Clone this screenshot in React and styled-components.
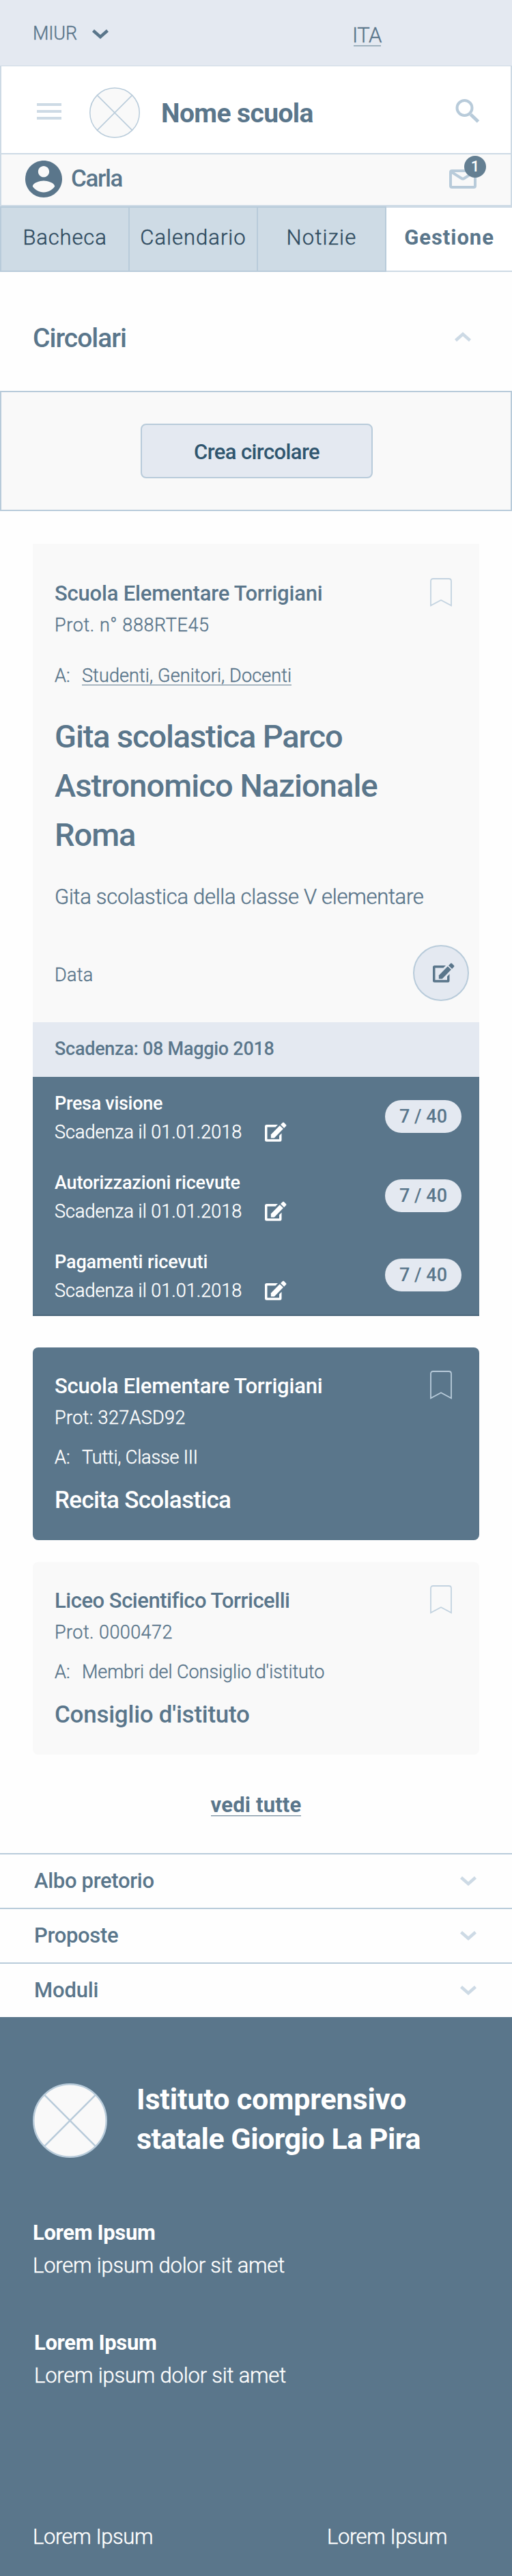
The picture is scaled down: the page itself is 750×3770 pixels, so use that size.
import React from 'react';
import styled, { createGlobalStyle, css } from 'styled-components';

const c = {
  slate: '#5a768b',
  navy: '#2f4b60',
  line: '#b8cbda',
  pale: '#cddae5',
  tab: '#cedbe5',
  mist: '#e4e9f1',
  paper: '#f9f9f9',
  page: '#fefefe',
};

const GlobalStyle = createGlobalStyle`
  *, *::before, *::after { box-sizing: border-box; }
  body { margin: 0; background: ${c.page}; }
  svg { display: block; flex: none; }
`;

const Page = styled.div`
  width: 750px;
  min-height: 3770px;
  display: flex;
  flex-direction: column;
  color: ${c.slate};
  background: ${c.page};
  font-family: Roboto, 'Liberation Sans', sans-serif;
`;

/* Light text gets a hairline stroke, for a weight between light and regular. */
const Text = styled.span`
  display: block;
  font-size: ${(p) => p.$size || 31}px;
  font-weight: ${(p) => p.$weight || 300};
  line-height: ${(p) => p.$line || 44}px;
  letter-spacing: ${(p) => p.$track || 0}px;
  white-space: nowrap;
  -webkit-text-stroke: ${(p) => (p.$weight > 300 ? 0 : 0.4)}px currentColor;
`;

/* ---------- header ---------- */

const TopBar = styled.div`
  display: flex;
  height: 96px;
  padding-left: 48px;
  background: ${c.mist};
`;

const Ministry = styled.div`
  display: flex;
  align-items: center;
  gap: 22px;
  width: 470px;
  padding-top: 1px;
  svg { margin-top: 3px; }
`;

const Language = styled(Text).attrs({ as: 'a' })`
  width: 40px;
  height: 31px;
  margin-top: 37px;
  border-bottom: 2px solid #9fb1be;
  text-indent: -2px;
`;

const Header = styled.header`
  display: flex;
  align-items: center;
  height: 130px;
  padding: 8px 45px 0 52px;
  background: #fff;
  border: 2px solid ${c.pale};
  border-top-width: 1px;
`;

const MenuIcon = styled.svg` margin-bottom: 3px; `;
const SchoolLogo = styled.svg` margin-left: 41px; `;
const SchoolName = styled(Text)` margin: 3px 0 0 31px; `;
const SearchIcon = styled.svg` margin: 0 0 5px auto; `;

const UserBar = styled.div`
  display: flex;
  align-items: center;
  height: 76px;
  padding: 0 36px 2px 35px;
  background: ${c.paper};
  border: solid ${c.pale};
  border-width: 0 2px 2px;
`;

const UserName = styled(Text)` margin-left: 13px; `;

const Mailbox = styled.div`
  position: relative;
  width: 54px;
  margin-left: auto;
`;

const Badge = styled.span`
  position: absolute;
  top: -20px;
  right: 0;
  width: 32px;
  height: 32px;
  border-radius: 50%;
  background: #647f92;
  color: #fff;
  font-size: 22px;
  font-weight: 500;
  line-height: 32px;
  text-align: center;
`;

const Tabs = styled.nav`
  display: grid;
  grid-template-columns: 190px 188px 188px 184px;
  height: 96px;
`;

const Tab = styled.a`
  display: flex;
  align-items: center;
  justify-content: center;
  padding-bottom: 5px;
  color: ${c.navy};
  background: ${c.tab};
  border: solid ${c.line};
  border-width: 2px 2px 2px 0;
  &:first-child { border-left-width: 2px; }
  ${(p) =>
    p.$active &&
    css`
      color: ${c.slate};
      background: #fff;
      border-color: ${c.pale};
      border-right-width: 0;
    `}
`;

/* ---------- circulars ---------- */

const SectionHead = styled.div`
  display: flex;
  align-items: center;
  justify-content: space-between;
  height: 174px;
  padding: 19px 60px 0 48px;
  svg { margin-bottom: 3px; }
`;

const CreateBox = styled.div`
  display: flex;
  align-items: center;
  justify-content: center;
  height: 176px;
  padding-left: 2px;
  background: ${c.paper};
  border: 2px solid ${c.line};
`;

const CreateButton = styled.button`
  display: flex;
  align-items: center;
  justify-content: center;
  width: 340px;
  height: 80px;
  padding: 3px 0 0;
  color: #30566f;
  font-family: inherit;
  background: ${c.mist};
  border: 2px solid ${c.line};
  border-radius: 8px;
`;

const CardList = styled.section`
  display: flex;
  flex-direction: column;
  padding: 48px 48px 0;
`;

const Card = styled.article`
  background: ${c.paper};
`;

const CardBody = styled.div`
  padding: 51px 15px 31px 32px;
`;

const CompactCard = styled.article`
  height: 282px;
  margin-top: ${(p) => p.$gap}px;
  padding: 35px 15px 0 32px;
  color: ${(p) => (p.$dark ? '#fff' : c.slate)};
  background: ${(p) => (p.$dark ? c.slate : c.paper)};
  border-radius: 8px;
`;

const CardTop = styled.div`
  display: flex;
  justify-content: space-between;
  padding-right: 25px;
  svg { margin-top: -1px; }
`;

const Recipients = styled.div`
  display: grid;
  grid-template-columns: 40px auto;
  justify-content: start;
  height: 27px;
  margin-top: ${(p) => p.$gap}px;
`;

const RecipientLink = styled(Text).attrs({ as: 'a' })`
  height: 27px;
  border-bottom: 1px solid ${c.slate};
`;

const Title = styled.h2`
  margin: 39px 0 33px;
  font-weight: 500;
`;

const CompactTitle = styled(Text)` margin-top: 25px; `;

const DateRow = styled.div`
  display: flex;
  align-items: center;
  justify-content: space-between;
  height: 82px;
  margin-top: 48px;
`;

const DateLabel = styled(Text)` padding-top: 5px; `;

const EditButton = styled.button`
  display: flex;
  align-items: center;
  justify-content: center;
  width: 82px;
  height: 82px;
  padding: 0 0 1px 7px;
  color: ${c.slate};
  background: ${c.mist};
  border: 2px solid ${c.line};
  border-radius: 50%;
`;

const Deadline = styled.div`
  display: flex;
  align-items: center;
  height: 80px;
  padding: 0 32px 2px;
  background: ${c.mist};
`;

const Responses = styled.div`
  color: #fff;
  background: ${c.slate};
  border-bottom: 2px solid #4a667a;
`;

const ResponseRow = styled.div`
  display: flex;
  justify-content: space-between;
  height: 116px;
  padding: 18px 26px 0 32px;
`;

const DueDate = styled.div`
  display: flex;
  align-items: center;
  gap: 33px;
  svg { margin-bottom: 2px; }
`;

const DueText = styled(Text)` width: 275px; `;

const Count = styled.span`
  width: 112px;
  height: 48px;
  margin-top: 16px;
  border-radius: 24px;
  color: ${c.slate};
  background: ${c.mist};
  font-size: 27px;
  font-weight: 500;
  line-height: 48px;
  text-align: center;
`;

const SeeAll = styled(Text).attrs({ as: 'a' })`
  align-self: center;
  height: 32px;
  margin: 58px 0 54px;
  border-bottom: 1px solid ${c.slate};
`;

const AccordionRow = styled.div`
  display: flex;
  align-items: center;
  justify-content: space-between;
  height: 80px;
  padding: 0 52px 0 50px;
  border-top: 2px solid ${c.line};
`;

/* ---------- footer ---------- */

const Footer = styled.footer`
  flex: 1;
  padding: 91px 48px 0;
  color: #fff;
  background: ${c.slate};
`;

const Institute = styled.div`
  display: flex;
  align-items: center;
  gap: 43px;
  height: 116px;
  svg { margin-top: 4px; }
`;

const FooterBlock = styled.div`
  margin-top: ${(p) => p.$gap}px;
  padding-left: ${(p) => p.$indent || 0}px;
`;

const FooterLinks = styled.div`
  display: grid;
  grid-template-columns: 431px auto;
  margin-top: 188px;
`;

/* ---------- drawings ---------- */

const Chevron = ({ color = c.pale, up }) => (
  <svg width="24" height="14" viewBox="0 0 24 14" fill="none" stroke={color} strokeWidth="4.5">
    <path d={up ? 'M1.5 12.3L12 3L22.5 12.3' : 'M1.5 1.7L12 11L22.5 1.7'} />
  </svg>
);

const Placeholder = ({ as: Tag = 'svg', size, stroke }) => {
  const mid = size / 2;
  const r = mid - stroke / 2;
  const d = r * 0.7;
  return (
    <Tag width={size} height={size} viewBox={`0 0 ${size} ${size}`} stroke={c.line} strokeWidth={stroke}>
      <circle cx={mid} cy={mid} r={r} fill={c.paper} />
      <path d={`M${mid - d} ${mid - d}L${mid + d} ${mid + d}M${mid + d} ${mid - d}L${mid - d} ${mid + d}`} />
    </Tag>
  );
};

const Bookmark = ({ color = '#c3d3e0' }) => (
  <svg width="32" height="42" viewBox="0 0 32 42" fill="none" stroke={color} strokeWidth="1.8">
    <path d="M1 40.3V4.5Q1 1 4.5 1H27.5Q31 1 31 4.5V40.3L16 32.2Z" />
  </svg>
);

const Edit = () => (
  <svg width="32" height="29" viewBox="0 0 32 29" fill="currentColor">
    <path d="M19 4H2.5Q0 4 0 6.5V26.2Q0 28.7 2.5 28.7H22Q24.5 28.7 24.5 26.2V16.5L21 20V25.2H3.5V7.5H15.5Z" />
    <path d="M8.8 23.4V18.6L21.8 5.2L26.9 10.1L13.8 23.4Z" />
    <path d="M23 4L26 1Q27 .2 28 1L31 4Q32 5 31 6L28.1 8.9Z" />
  </svg>
);

/* ---------- data ---------- */

const tabs = [
  { label: 'Bacheca', track: 0.85 },
  { label: 'Calendario', track: 1 },
  { label: 'Notizie', track: 1.2 },
  { label: 'Gestione', track: 0.95, active: true },
];

const titleLines = [
  { text: 'Gita scolastica Parco', track: -1.13 },
  { text: 'Astronomico Nazionale', track: -0.91 },
  { text: 'Roma', track: -1.06 },
];

const responses = [
  { label: 'Presa visione', track: -0.3 },
  { label: 'Autorizzazioni ricevute', track: -0.18 },
  { label: 'Pagamenti ricevuti', track: -0.11 },
];

const sections = [
  { label: 'Albo pretorio', track: -0.32 },
  { label: 'Proposte', track: -0.32 },
  { label: 'Moduli', track: -0.16 },
];

export default function App() {
  return (
    <Page>
      <GlobalStyle />

      <TopBar>
        <Ministry>
          <Text $size={27} $track={-0.11}>MIUR</Text>
          <Chevron color={c.slate} />
        </Ministry>
        <Language $track={-0.57} $line={29}>ITA</Language>
      </TopBar>

      <Header>
        <MenuIcon width="36" height="24" viewBox="0 0 36 24" fill={c.pale}>
          <path d="M0 0H36V4H0ZM0 10H36V14H0ZM0 20H36V24H0Z" />
        </MenuIcon>
        <Placeholder as={SchoolLogo} size={74} stroke={1.5} />
        <SchoolName $size={39} $weight={700} $track={-0.61}>Nome scuola</SchoolName>
        <SearchIcon width="36" height="36" viewBox="0 0 36 36" fill="none" stroke={c.line}>
          <circle cx="13.5" cy="14" r="11" strokeWidth="4" />
          <path d="M22.5 23.5L33.5 34" strokeWidth="5" />
        </SearchIcon>
      </Header>

      <UserBar>
        <svg width="54" height="54" viewBox="2 2 20 20" fill={c.slate}>
          <path d="M12 2C6.48 2 2 6.48 2 12s4.48 10 10 10 10-4.48 10-10S17.52 2 12 2zm0 3c1.66 0 3 1.34 3 3s-1.34 3-3 3-3-1.34-3-3 1.34-3 3-3zm0 14.2c-2.5 0-4.71-1.28-6-3.22.03-1.99 4-3.08 6-3.08 1.99 0 5.97 1.09 6 3.08-1.29 1.94-3.5 3.22-6 3.22z" />
        </svg>
        <UserName $size={35} $weight={500} $track={-1.38}>Carla</UserName>
        <Mailbox>
          <svg width="40" height="28" viewBox="0 0 40 28" fill="none" stroke={c.line} strokeWidth="4">
            <rect x="2" y="2" width="36" height="24" rx="2" />
            <path d="M3 3.5L18 13Q20 14.3 22 13L37 3.5" />
          </svg>
          <Badge>1</Badge>
        </Mailbox>
      </UserBar>

      <Tabs>
        {tabs.map((t) => (
          <Tab key={t.label} $active={t.active}>
            <Text $track={t.track} $weight={t.active ? 700 : 300}>{t.label}</Text>
          </Tab>
        ))}
      </Tabs>

      <SectionHead>
        <Text $size={39} $weight={500} $track={-1.01}>Circolari</Text>
        <Chevron up />
      </SectionHead>

      <CreateBox>
        <CreateButton>
          <Text $weight={500} $track={-0.6}>Crea circolare</Text>
        </CreateButton>
      </CreateBox>

      <CardList>
        <Card>
          <CardBody>
            <CardTop>
              <div>
                <Text $weight={500} $track={-0.19}>Scuola Elementare Torrigiani</Text>
                <Text $size={27} $line={48} $track={0.6}>Prot. n° 888RTE45</Text>
              </div>
              <Bookmark />
            </CardTop>
            <Recipients $gap={37}>
              <Text $size={27} $line={26}>A:</Text>
              <RecipientLink $size={27} $line={26} $track={0.12}>Studenti, Genitori, Docenti</RecipientLink>
            </Recipients>
            <Title>
              {titleLines.map((l) => (
                <Text key={l.text} $size={47} $weight={500} $line={72} $track={l.track}>{l.text}</Text>
              ))}
            </Title>
            <Text $track={-0.3}>Gita scolastica della classe V elementare</Text>
            <DateRow>
              <DateLabel $size={27} $track={0.3}>Data</DateLabel>
              <EditButton><Edit /></EditButton>
            </DateRow>
          </CardBody>
          <Deadline>
            <Text $size={27} $weight={500} $track={-0.27}>Scadenza: 08 Maggio 2018</Text>
          </Deadline>
          <Responses>
            {responses.map((r) => (
              <ResponseRow key={r.label}>
                <div>
                  <Text $size={27} $weight={500} $line={42} $track={r.track}>{r.label}</Text>
                  <DueDate>
                    <DueText $size={27} $line={42} $track={0.02}>Scadenza il 01.01.2018</DueText>
                    <Edit />
                  </DueDate>
                </div>
                <Count>7 / 40</Count>
              </ResponseRow>
            ))}
          </Responses>
        </Card>

        <CompactCard $dark $gap={46}>
          <CardTop>
            <div>
              <Text $weight={500} $track={-0.19}>Scuola Elementare Torrigiani</Text>
              <Text $size={27} $line={48} $track={0.34}>Prot: 327ASD92</Text>
            </div>
            <Bookmark color="#b8cbda" />
          </CardTop>
          <Recipients $gap={21}>
            <Text $size={27} $line={26}>A:</Text>
            <Text $size={27} $line={26} $track={-0.16}>Tutti, Classe III</Text>
          </Recipients>
          <CompactTitle $size={35} $weight={500} $line={48} $track={-0.7}>Recita Scolastica</CompactTitle>
        </CompactCard>

        <CompactCard $gap={32}>
          <CardTop>
            <div>
              <Text $weight={500} $track={-0.48}>Liceo Scientifico Torricelli</Text>
              <Text $size={27} $line={48} $track={0.44}>Prot. 0000472</Text>
            </div>
            <Bookmark />
          </CardTop>
          <Recipients $gap={21}>
            <Text $size={27} $line={26}>A:</Text>
            <Text $size={27} $line={26} $track={-0.05}>Membri del Consiglio d'istituto</Text>
          </Recipients>
          <CompactTitle $size={35} $weight={500} $line={48} $track={-0.25}>Consiglio d'istituto</CompactTitle>
        </CompactCard>

        <SeeAll $weight={700} $line={31} $track={0.17}>vedi tutte</SeeAll>
      </CardList>

      {sections.map((s) => (
        <AccordionRow key={s.label}>
          <Text $weight={500} $track={s.track}>{s.label}</Text>
          <Chevron />
        </AccordionRow>
      ))}

      <Footer>
        <Institute>
          <Placeholder size={109} stroke={2.5} />
          <div>
            <Text $size={43} $weight={700} $line={58} $track={-0.15}>Istituto comprensivo</Text>
            <Text $size={43} $weight={700} $line={58} $track={-0.52}>statale Giorgio La Pira</Text>
          </div>
        </Institute>
        <FooterBlock $gap={85}>
          <Text $weight={700} $line={48} $track={-0.35}>Lorem Ipsum</Text>
          <Text $line={48} $track={-0.2}>Lorem ipsum dolor sit amet</Text>
        </FooterBlock>
        <FooterBlock $gap={65} $indent={2}>
          <Text $weight={700} $line={48} $track={-0.35}>Lorem Ipsum</Text>
          <Text $line={48} $track={-0.2}>Lorem ipsum dolor sit amet</Text>
        </FooterBlock>
        <FooterLinks>
          <Text $line={48} $track={-0.42}>Lorem Ipsum</Text>
          <Text $line={48} $track={-0.42}>Lorem Ipsum</Text>
        </FooterLinks>
      </Footer>
    </Page>
  );
}
